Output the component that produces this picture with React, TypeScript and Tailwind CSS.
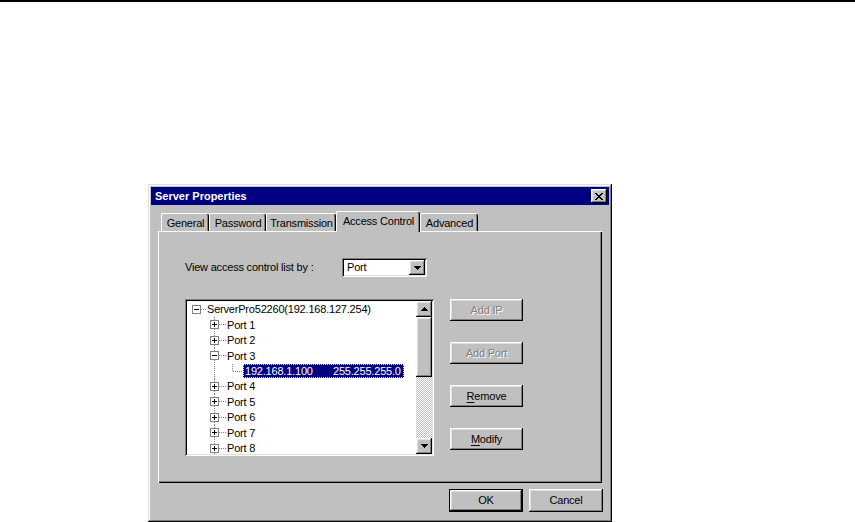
import React from "react";

const RAISED =
  "shadow-[inset_-1px_-1px_0_#000,inset_1px_1px_0_#fff,inset_-2px_-2px_0_#808080,inset_2px_2px_0_#dfdfdf]";
const SUNKEN =
  "shadow-[inset_1px_1px_0_#808080,inset_-1px_-1px_0_#fff,inset_2px_2px_0_#000,inset_-2px_-2px_0_#dfdfdf]";

function Box({ cx, minus }: { cx: number; minus: boolean }) {
  return (
    <g shapeRendering="crispEdges">
      <rect x={cx + 0.5} y={3.5} width={8} height={8} fill="#fff" stroke="#808080" />
      <line x1={cx + 2} x2={cx + 7} y1={7.5} y2={7.5} stroke="#000" />
      {!minus && <line x1={cx + 4.5} x2={cx + 4.5} y1={5} y2={10} stroke="#000" />}
    </g>
  );
}

function Dot({ x1, y1, x2, y2 }: { x1: number; y1: number; x2: number; y2: number }) {
  return (
    <line
      x1={x1}
      y1={y1}
      x2={x2}
      y2={y2}
      stroke="#808080"
      strokeDasharray="1 1"
      shapeRendering="crispEdges"
    />
  );
}

function RootRow() {
  return (
    <div className="h-[15.4px] flex items-center">
      <svg width={20} height={15.4} className="shrink-0">
        <Dot x1={14} y1={7.5} x2={20} y2={7.5} />
        <Box cx={5} minus />
      </svg>
      <span>ServerPro52260(192.168.127.254)</span>
    </div>
  );
}

function PortRow({ label, open }: { label: string; open?: boolean }) {
  return (
    <div className="h-[15.4px] flex items-center">
      <svg width={40} height={15.4} className="shrink-0">
        <Dot x1={27.5} y1={0} x2={27.5} y2={15.4} />
        <Dot x1={32} y1={7.5} x2={39} y2={7.5} />
        <Box cx={23} minus={!!open} />
      </svg>
      <span>{label}</span>
    </div>
  );
}

function LeafRow() {
  return (
    <div className="h-[15.4px] flex items-center">
      <svg width={56} height={15.4} className="shrink-0">
        <Dot x1={27.5} y1={0} x2={27.5} y2={15.4} />
        <Dot x1={45.5} y1={0} x2={45.5} y2={7.5} />
        <Dot x1={46} y1={7.5} x2={56} y2={7.5} />
      </svg>
      <div className="h-[14px] w-[161px] bg-[#000080] text-white border border-dotted border-[#ffff00] flex items-center pl-[1px] whitespace-nowrap overflow-hidden">
        <span className="w-[88px] shrink-0">192.168.1.100</span>
        <span>255.255.255.0</span>
      </div>
    </div>
  );
}

function Arrow({ up }: { up?: boolean }) {
  return (
    <svg width={7} height={4} viewBox="0 0 7 4" shapeRendering="crispEdges">
      {up ? (
        <path d="M3 0h1v1h1v1h1v1h1v1H0V3h1V2h1V1h1z" fill="#000" />
      ) : (
        <path d="M0 0h7v1H6v1H5v1H4v1H3V3H2V2H1V1H0z" fill="#000" />
      )}
    </svg>
  );
}

function Btn({
  label,
  u,
  disabled,
  w = "w-[73px]",
  h = "h-[22px]",
}: {
  label: string;
  u?: boolean;
  disabled?: boolean;
  w?: string;
  h?: string;
}) {
  return (
    <div
      className={`${w} ${h} bg-[#c0c0c0] ${RAISED} flex items-center justify-center text-[11px] ${
        disabled ? "text-[#808080] [text-shadow:1px_1px_0_#fff]" : "text-black"
      }`}
    >
      {u ? (
        <span>
          <span className="underline underline-offset-2">{label[0]}</span>
          {label.slice(1)}
        </span>
      ) : (
        <span>{label}</span>
      )}
    </div>
  );
}

function Tab({ label, w, selected }: { label: string; w: string; selected?: boolean }) {
  if (selected) {
    return (
      <div
        className={`${w} h-[21px] -mb-[1px] relative z-10 bg-[#c0c0c0] rounded-tl-[2px] rounded-tr-[2px] border-l border-t border-white shadow-[inset_-1px_0_0_#000,inset_-2px_0_0_#808080] flex items-start justify-center pt-[1px] text-[11px] whitespace-nowrap`}
      >
        {label}
      </div>
    );
  }
  return (
    <div
      className={`${w} h-[18px] bg-[#c0c0c0] rounded-tl-[2px] rounded-tr-[2px] border-l border-t border-white shadow-[inset_-1px_0_0_#000,inset_-2px_0_0_#808080] flex items-start justify-center pt-[1px] text-[11px] whitespace-nowrap`}
    >
      {label}
    </div>
  );
}

export default function App() {
  return (
    <div className="w-[855px] h-[522px] bg-white overflow-hidden font-['Liberation_Sans',Arial,sans-serif] text-black tracking-[-0.2px]">
      <div className="h-[2px] bg-black" />
      <div
        className={`ml-[148px] mt-[182px] w-[464px] h-[338px] bg-[#c0c0c0] p-[3px] shadow-[inset_-1px_-1px_0_#000,inset_1px_1px_0_#dfdfdf,inset_-2px_-2px_0_#808080,inset_2px_2px_0_#fff] flex flex-col`}
      >
        {/* Title bar */}
        <div className="h-[18px] bg-[#000080] flex items-center justify-between pl-[4px] pr-[2px]">
          <span className="text-white font-bold text-[11px] tracking-normal">Server Properties</span>
          <div className={`w-[16px] h-[14px] bg-[#c0c0c0] ${RAISED} flex items-center justify-center`}>
            <svg width={8} height={7} viewBox="0 0 8 7" shapeRendering="crispEdges">
              <path
                d="M0 0h2v1h1v1h2V1h1V0h2v1H7v1H6v1H5v1h1v1h1v1h1v1H6V6H5V5H3v1H2v1H0V6h1V5h1V4h1V3H2V2H1V1H0z"
                fill="#000"
              />
            </svg>
          </div>
        </div>

        {/* Body */}
        <div className="pl-[7px] pt-[6px] flex flex-col">
          {/* Tabs */}
          <div className="h-[20px] flex items-end pl-[3px]">
            <Tab label="General" w="w-[48px]" />
            <Tab label="Password" w="w-[57px]" />
            <Tab label="Transmission" w="w-[70px]" />
            <Tab label="Access Control" w="w-[84px]" selected />
            <Tab label="Advanced" w="w-[58px]" />
          </div>

          {/* Panel */}
          <div className="w-[444px] h-[252px] shadow-[inset_1px_1px_0_#fff,inset_-1px_-1px_0_#000,inset_-2px_-2px_0_#808080] pl-[27px] pt-[27px] text-[11px]">
            <div className="flex items-center h-[19px]">
              <span className="w-[157px]">View access control list by :</span>
              <div className={`w-[85px] h-[19px] bg-white ${SUNKEN} flex items-center p-[2px]`}>
                <span className="flex-1 pl-[3px]">Port</span>
                <div className={`w-[16px] h-[15px] bg-[#c0c0c0] ${RAISED} flex items-center justify-center`}>
                  <Arrow />
                </div>
              </div>
            </div>

            <div className="flex mt-[22px]">
              {/* Tree */}
              <div className={`w-[249px] h-[157px] bg-white ${SUNKEN} p-[2px] flex`}>
                <div className="flex-1 overflow-hidden pt-[1px]">
                  <RootRow />
                  <PortRow label="Port 1" />
                  <PortRow label="Port 2" />
                  <PortRow label="Port 3" open />
                  <LeafRow />
                  <PortRow label="Port 4" />
                  <PortRow label="Port 5" />
                  <PortRow label="Port 6" />
                  <PortRow label="Port 7" />
                  <PortRow label="Port 8" />
                </div>
                <div className="w-[16px] flex flex-col">
                  <div className={`h-[16px] bg-[#c0c0c0] ${RAISED} flex items-center justify-center`}>
                    <Arrow up />
                  </div>
                  <div className={`h-[60px] bg-[#c0c0c0] ${RAISED}`} />
                  <div className="flex-1 bg-[repeating-conic-gradient(#ffffff_0_25%,#c0c0c0_0_50%)] bg-[length:2px_2px]" />
                  <div className={`h-[16px] bg-[#c0c0c0] ${RAISED} flex items-center justify-center`}>
                    <Arrow />
                  </div>
                </div>
              </div>

              {/* Buttons */}
              <div className="ml-[16px] flex flex-col gap-[21px]">
                <Btn label="Add IP" disabled />
                <Btn label="Add Port" disabled />
                <Btn label="Remove" u />
                <Btn label="Modify" u />
              </div>
            </div>
          </div>

          {/* Bottom buttons */}
          <div className="flex justify-end gap-[6px] mt-[6px] w-[445px]">
            <div className="w-[74px] h-[23px] border border-black">
              <Btn label="OK" w="w-full" h="h-full" />
            </div>
            <Btn label="Cancel" w="w-[74px]" h="h-[23px]" />
          </div>
        </div>
      </div>
    </div>
  );
}
